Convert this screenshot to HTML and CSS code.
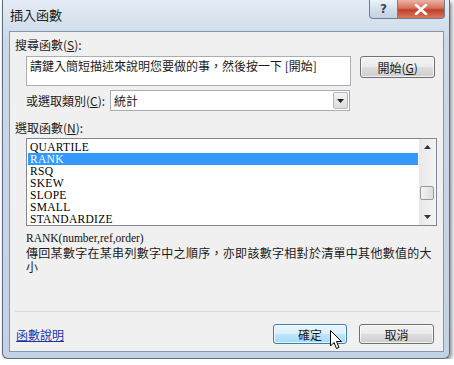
FILE: index.html
```html
<!DOCTYPE html>
<html>
<head lang="zh-Hant">
    <meta charset="UTF-8">
    <title>插入函數</title>
    <link rel="stylesheet" href="styles.css">
</head>
<body>
<div class="window">
    <div class="titlebar">
        <span class="title">插入函數</span>
        <div class="caption_btns">
            <span class="cap cap_help">?</span>
            <span class="cap cap_close">
                <svg width="14" height="11" viewBox="0 0 14 11"><path d="M2 1 L12 10 M12 1 L2 10" stroke="#fff" stroke-width="2.6" stroke-linecap="round"/></svg>
            </span>
        </div>
    </div>
    <div class="client">
        <div class="label">搜尋函數(<u>S</u>):</div>
        <div class="search_row">
            <div class="textbox">請鍵入簡短描述來說明您要做的事，然後按一下 [開始]</div>
            <div class="btn btn_start">開始(<u>G</u>)</div>
        </div>
        <div class="cat_row">
            <span class="cat_label">或選取類別(<u>C</u>):</span>
            <div class="select">
                <span class="select_text">統計</span>
                <span class="drop"><svg width="7" height="4" viewBox="0 0 7 4"><path d="M0 0 H7 L3.5 4 Z" fill="#222"/></svg></span>
            </div>
        </div>
        <div class="label fn_label">選取函數(<u>N</u>):</div>
        <div class="listbox">
            <ul class="items">
                <li>QUARTILE</li>
                <li class="selected">RANK</li>
                <li>RSQ</li>
                <li>SKEW</li>
                <li>SLOPE</li>
                <li>SMALL</li>
                <li>STANDARDIZE</li>
            </ul>
            <div class="scrollbar">
                <span class="arrow"><svg width="7" height="4" viewBox="0 0 7 4"><path d="M0 4 H7 L3.5 0 Z" fill="#333"/></svg></span>
                <div class="track"><span class="thumb"></span></div>
                <span class="arrow"><svg width="7" height="4" viewBox="0 0 7 4"><path d="M0 0 H7 L3.5 4 Z" fill="#333"/></svg></span>
            </div>
        </div>
        <div class="signature">RANK(number,ref,order)</div>
        <div class="desc">傳回某數字在某串列數字中之順序，亦即該數字相對於清單中其他數值的大小</div>
        <div class="footer">
            <a class="help_link" href="#">函數說明</a>
            <div class="footer_btns">
                <div class="btn btn_ok">確定</div>
                <div class="btn btn_cancel">取消</div>
            </div>
        </div>
    </div>
    <svg class="cursor" width="13" height="20" viewBox="0 0 13 20">
        <path d="M0.5 0.5 L0.5 16 L4 12.5 L6.5 18.5 L9 17.5 L6.5 11.5 L11.5 11.5 Z" fill="#fff" stroke="#000" stroke-width="1" stroke-linejoin="round"/>
    </svg>
</div>
</body>
</html>
```

FILE: styles.css
```css
body {
    margin: 0;
    background: #fff;
    font-family: "Noto Sans CJK TC", "Noto Sans", sans-serif;
    font-size: 12px;
    color: #1b1b1b;
}
.window {
    position: relative;
    margin-left: 2px;
    width: 435px;
    height: 352px;
    padding: 0 5px 6px 6px;
    background: linear-gradient(#e3ebf5, #cbd8e8 12%, #c3d2e4);
    border: 1px solid #5a6b82;
    border-top: 0;
    border-radius: 0 0 6px 6px;
    box-shadow: 2px 2px 4px rgba(0, 0, 0, .45);
}
.titlebar {
    height: 31px;
    display: flex;
    justify-content: space-between;
    align-items: flex-start;
}
.title {
    margin-top: 7px;
    margin-left: 1px;
    font-size: 13px;
    line-height: 16px;
    color: #202020;
}
.caption_btns {
    display: flex;
    margin-right: -1px;
}
.cap {
    height: 18px;
    display: flex;
    align-items: center;
    justify-content: center;
    border: 1px solid #6f7f95;
    border-top: 0;
}
.cap_help {
    width: 27px;
    border-radius: 0 0 0 4px;
    background: linear-gradient(#eef3f9, #d4dfec 50%, #c2d0e1);
    font-family: "DejaVu Sans", sans-serif;
    font-size: 12px;
    font-weight: bold;
    color: #3a4a5e;
}
.cap_close {
    width: 46px;
    border-left: 0;
    border-radius: 0 0 4px 0;
    background: linear-gradient(#eab3a6, #d6705b 45%, #c2402a 55%, #d8795f);
}
.client {
    height: 306px;
    padding: 6px 8px 7px 5px;
    border: 1px solid #8396ae;
    background: #f0f0f0;
    display: flex;
    flex-direction: column;
}
.label {
    line-height: 14px;
}
.search_row {
    display: flex;
    align-items: flex-start;
    margin-top: 4px;
    margin-left: 11px;
}
.textbox {
    width: 319px;
    height: 28px;
    padding: 0 2px 0 3px;
    border: 1px solid #abadb3;
    background: #fff;
    line-height: 17px;
}
.btn {
    box-sizing: border-box;
    height: 22px;
    display: flex;
    align-items: center;
    justify-content: center;
    border: 1px solid #707070;
    border-radius: 3px;
    background: linear-gradient(#f2f2f2, #ebebeb 50%, #dddddd 51%, #cfcfcf);
    box-shadow: inset 0 0 0 1px rgba(255, 255, 255, .7);
}
.btn_start {
    width: 75px;
    margin-left: 9px;
}
.cat_row {
    display: flex;
    align-items: center;
    margin-top: 4px;
    margin-left: 11px;
}
.cat_label {
    width: 84px;
}
.select {
    box-sizing: border-box;
    width: 240px;
    height: 21px;
    display: flex;
    align-items: center;
    justify-content: space-between;
    border: 1px solid #a5acb5;
    background: #fff;
}
.select_text {
    padding-left: 3px;
}
.drop {
    width: 15px;
    height: 17px;
    margin-right: 1px;
    display: flex;
    align-items: center;
    justify-content: center;
    border: 1px solid #b2b8c0;
    border-radius: 2px;
    background: linear-gradient(#f4f4f4, #dcdcdc);
    box-sizing: border-box;
}
.fn_label {
    margin-top: 10px;
}
.listbox {
    box-sizing: border-box;
    width: 411px;
    height: 88px;
    margin-top: 3px;
    margin-left: 11px;
    display: flex;
    border: 1px solid #828790;
    background: #fff;
}
.items {
    flex: 1;
    margin: 0;
    padding: 2px 1px 0 1px;
    list-style: none;
    font-family: "Liberation Serif", serif;
    font-size: 11.5px;
    line-height: 12px;
    color: #000;
}
.items li {
    height: 12px;
    padding-left: 2px;
    letter-spacing: .3px;
}
.items .selected {
    background: #3399ff;
    color: #fff;
}
.scrollbar {
    width: 17px;
    display: flex;
    flex-direction: column;
    background: linear-gradient(90deg, #e8e8e8, #f4f4f4);
}
.arrow {
    height: 16px;
    display: flex;
    align-items: center;
    justify-content: center;
}
.track {
    flex: 1;
    padding-top: 31px;
}
.thumb {
    display: block;
    width: 14px;
    height: 14px;
    margin-left: 1px;
    border: 1px solid #9a9a9a;
    border-radius: 2px;
    background: linear-gradient(90deg, #f4f4f4, #dcdcdc);
    box-sizing: border-box;
}
.signature {
    margin-top: 6px;
    margin-left: 11px;
    font-family: "Liberation Serif", serif;
    font-size: 11.5px;
    line-height: 13px;
    color: #111;
}
.desc {
    width: 412px;
    margin-top: 1px;
    margin-left: 11px;
    line-height: 14px;
    letter-spacing: .3px;
}
.footer {
    margin-top: auto;
    margin-right: -5px;
    padding-top: 12px;
    border-top: 1px solid #dcdcdc;
    display: flex;
    justify-content: space-between;
    align-items: center;
}
.help_link {
    margin-left: 1px;
    color: #2233aa;
    text-decoration: underline;
}
.footer_btns {
    display: flex;
    gap: 12px;
    margin-right: 6px;
}
.footer_btns .btn {
    height: 20px;
}
.btn_ok {
    width: 74px;
    border-color: #3c7fb1;
    background: linear-gradient(#eaf6fd, #d9f0fc 50%, #bee6fd 51%, #a7d9f5);
}
.btn_cancel {
    width: 75px;
}
.cursor {
    position: absolute;
    left: 327px;
    top: 330px;
}
```
